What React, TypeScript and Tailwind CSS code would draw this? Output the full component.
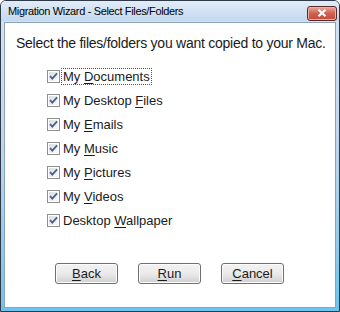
import type { ReactNode } from 'react';

const items: { pre: string; key: string; post: string; focused?: boolean }[] = [
  { pre: 'My ', key: 'D', post: 'ocuments', focused: true },
  { pre: 'My Desktop ', key: 'F', post: 'iles' },
  { pre: 'My ', key: 'E', post: 'mails' },
  { pre: 'My ', key: 'M', post: 'usic' },
  { pre: 'My ', key: 'P', post: 'ictures' },
  { pre: 'My ', key: 'V', post: 'ideos' },
  { pre: 'Desktop ', key: 'W', post: 'allpaper' },
];

function CheckBox() {
  return (
    <svg width="13" height="13" viewBox="0 0 13 13" className="shrink-0">
      <defs>
        <linearGradient id="cbg" x1="0" y1="0" x2="1" y2="1">
          <stop offset="0" stopColor="#dcdcdc" />
          <stop offset="1" stopColor="#fbfbfb" />
        </linearGradient>
      </defs>
      <rect x="0.5" y="0.5" width="12" height="12" fill="#fff" stroke="#8e8f8f" />
      <rect x="2" y="2" width="9" height="9" fill="url(#cbg)" />
      <path d="M3 6.2 L5.3 8.6 L10 3.4" fill="none" stroke="#4a5f97" strokeWidth="1.8" />
    </svg>
  );
}

function Btn({ k, rest }: { k: string; rest: string }) {
  return (
    <button className="w-[63px] h-[21px] rounded-[3px] border border-[#707070] bg-gradient-to-b from-[#f2f2f2] via-[#ebebeb] to-[#cfcfcf] text-[13px] text-[#1a1a1a] leading-none flex items-center justify-center shadow-[inset_0_0_0_1px_#fcfcfc]">
      <span>
        <span className="underline underline-offset-2">{k}</span>
        {rest}
      </span>
    </button>
  );
}

function Label({ children, focused }: { children: ReactNode; focused?: boolean }) {
  return (
    <span
      className={
        focused
          ? 'ml-[1px] px-[1px] border border-dotted border-[#555] leading-[15px]'
          : 'ml-[3px] leading-[15px]'
      }
    >
      {children}
    </span>
  );
}

export default function App() {
  return (
    <div
      className="w-[340px] h-[312px] flex flex-col border border-[#2f3a48] rounded-t-[6px] bg-gradient-to-b from-[#d5e4f5] via-[#bcd5ee] to-[#6cc3ee] overflow-hidden"
      style={{ fontFamily: '"Liberation Sans", Arial, sans-serif' }}
    >
      <div className="h-[20px] shrink-0 flex items-center justify-between pl-[7px] pr-[2px] bg-gradient-to-b from-[#e1ecf8] to-[#c4d8ef]">
        <span className="text-[11px] tracking-[-0.35px] text-black">
          Migration Wizard - Select Files/Folders
        </span>
        <div className="w-[30px] h-[15px] mt-[4px] rounded-[3px] border border-[#5a2a2a] bg-gradient-to-b from-[#e9a99b] via-[#d0604f] to-[#c44a3a] flex items-center justify-center shadow-[inset_0_0_0_1px_#eeb0a4]">
          <svg width="10" height="8" viewBox="0 0 10 8">
            <path d="M1.5 0.8 L8.5 7.2 M8.5 0.8 L1.5 7.2" stroke="#fff" strokeWidth="2.2" />
          </svg>
        </div>
      </div>
      <div className="flex-1 mx-[3px] mb-[3px] mt-[1px] bg-white border border-[#8da2b9] flex flex-col text-[#1a1a1a]">
        <div className="pt-[12px] pl-[11px] text-[14px] tracking-[-0.25px] leading-[17px] whitespace-nowrap">
          Select the files/folders you want copied to your Mac.
        </div>
        <div className="mt-[12px] ml-[42px] flex flex-col text-[13px]">
          {items.map((it) => (
            <div key={it.key} className="h-[24px] flex items-center">
              <CheckBox />
              <Label focused={it.focused}>
                {it.pre}
                <span className="underline underline-offset-2">{it.key}</span>
                {it.post}
              </Label>
            </div>
          ))}
        </div>
        <div className="mt-[31px] pl-[50px] flex gap-[20px]">
          <Btn k="B" rest="ack" />
          <Btn k="R" rest="un" />
          <Btn k="C" rest="ancel" />
        </div>
      </div>
    </div>
  );
}
